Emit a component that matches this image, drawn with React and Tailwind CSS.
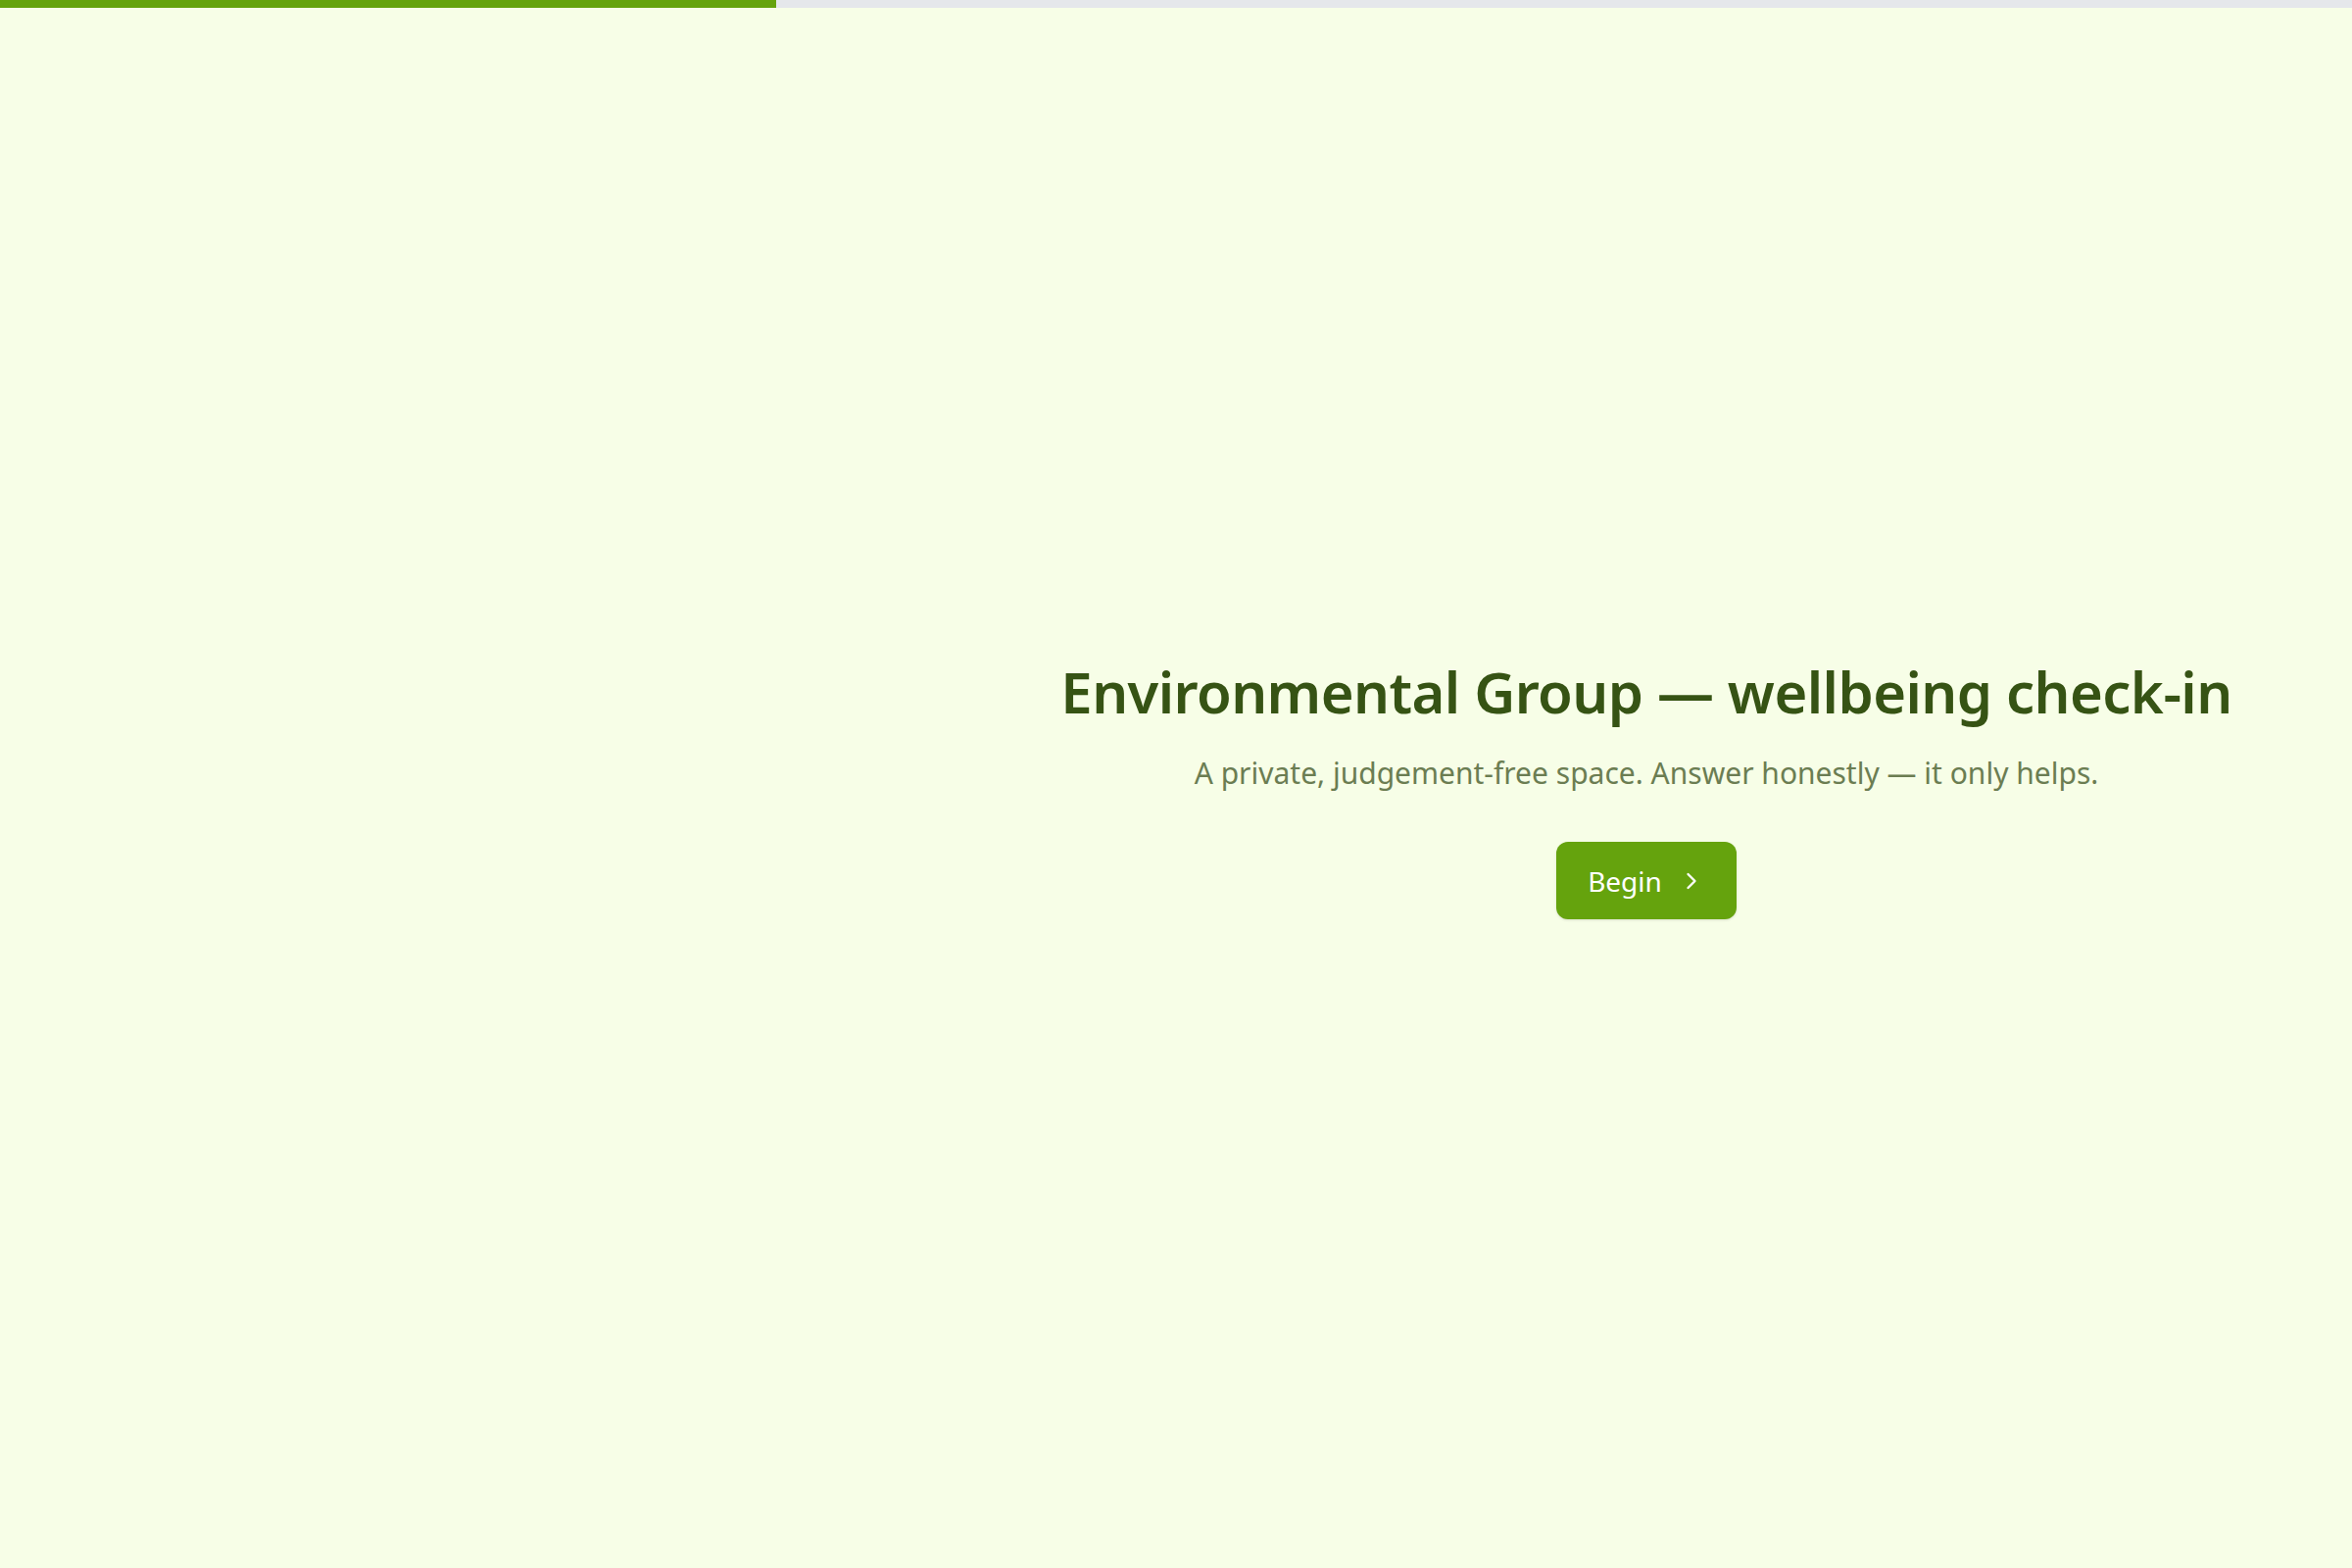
import { ChevronRight } from "lucide-react";

const PROGRESS = 33;

export default function App() {
  return (
    <div className="min-h-screen flex flex-col bg-[#f7fee7]" style={{ fontFamily: '"Noto Sans", "Open Sans", sans-serif' }}>
      {/* progress */}
      <div className="h-2 w-full bg-gray-200">
        <div className="h-full bg-[#65a30d]" style={{ width: `${PROGRESS}%` }} />
      </div>

      <div className="flex-1 flex">
        {/* left column kept empty on the intro step */}
        <aside className="w-2/5" />

        <main className="flex-1 flex flex-col items-center justify-center text-center">
          <h1 className="text-[58px] leading-tight font-semibold tracking-[-0.01em] text-[#365314]">
            Environmental Group — wellbeing check-in
          </h1>
          <p className="mt-6 text-[30px] text-[#6b7d52]">
            A private, judgement-free space. Answer honestly — it only helps.
          </p>
          <button className="mt-12 h-[79px] w-[184px] rounded-xl bg-[#65a30d] text-white text-[28px] flex items-center justify-center gap-4 shadow-sm">
            Begin
            <ChevronRight className="w-7 h-7" strokeWidth={2} />
          </button>
        </main>
      </div>
    </div>
  );
}
